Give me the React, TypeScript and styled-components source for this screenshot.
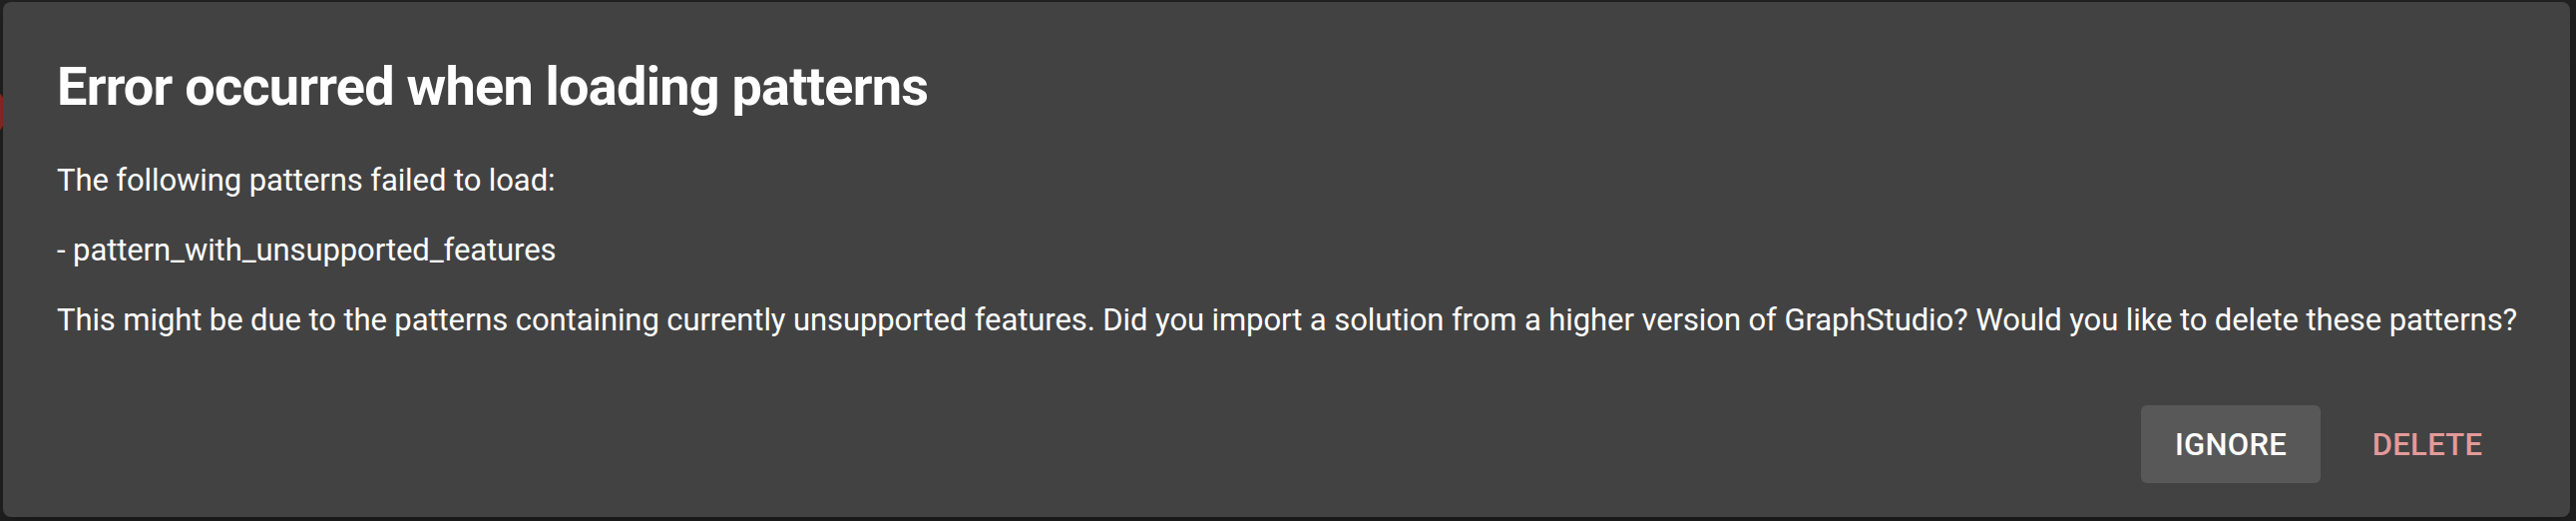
import React from 'react';
import styled, { createGlobalStyle } from 'styled-components';

const GlobalStyle = createGlobalStyle`
  html, body {
    margin: 0;
    padding: 0;
    background: #222222;
  }
  body {
    font-family: Roboto, "Liberation Sans", Arial, sans-serif;
    -webkit-font-smoothing: antialiased;
  }
`;

const Backdrop = styled.div`
  width: 2582px;
  height: 522px;
  background: #212121;
  padding: 2px 6px 4px 3px;
  box-sizing: border-box;
  position: relative;
  overflow: hidden;
`;

const BehindDot = styled.div`
  position: absolute;
  left: -20px;
  top: 90px;
  width: 26px;
  height: 44px;
  border-radius: 50%;
  background: #8e2b25;
`;

const Dialog = styled.div`
  position: relative;
  height: 516px;
  background: #424242;
  border-radius: 8px;
  display: flex;
  flex-direction: column;
  color: #ffffff;
  box-shadow: 0 11px 15px -7px rgba(0,0,0,0.2), 0 24px 38px 3px rgba(0,0,0,0.14);
`;

const Title = styled.h2`
  margin: 0;
  padding: 42px 54px 0;
  font-size: 54px;
  font-weight: 700;
  line-height: 86px;
  letter-spacing: -0.75px;
`;

const Content = styled.div`
  padding: 28px 20px 0 54px;
`;

const Text = styled.p`
  margin: 0 0 25px;
  font-size: 31px;
  line-height: 45px;
  font-weight: 400;
  letter-spacing: -0.09px;
  color: #ffffff;

  &:last-child { margin-bottom: 0; }
`;

const Actions = styled.div`
  margin-top: auto;
  display: flex;
  justify-content: flex-end;
  gap: 18px;
  padding: 0 54px 34px;
`;

const Button = styled.button<{ $tone?: 'danger' }>`
  height: 78px;
  width: ${(p) => (p.$tone === 'danger' ? '178px' : '180px')};
  padding: 0;
  border: none;
  border-radius: 6px;
  font-family: Roboto, "Liberation Sans", Arial, sans-serif;
  font-size: 31px;
  font-weight: 500;
  letter-spacing: 0.3px;
  text-transform: uppercase;
  cursor: pointer;
  background: ${(p) => (p.$tone === 'danger' ? 'transparent' : '#585858')};
  color: ${(p) => (p.$tone === 'danger' ? '#e39a9a' : '#ffffff')};
`;

export default function App() {
  return (
    <>
      <GlobalStyle />
      <Backdrop>
        <BehindDot />
        <Dialog role="dialog">
          <Title>Error occurred when loading patterns</Title>
          <Content>
            <Text>The following patterns failed to load:</Text>
            <Text>- pattern_with_unsupported_features</Text>
            <Text>
              This might be due to the patterns containing currently unsupported features. Did you import a solution from a higher version of GraphStudio? Would you like to delete these patterns?
            </Text>
          </Content>
          <Actions>
            <Button>Ignore</Button>
            <Button $tone="danger">Delete</Button>
          </Actions>
        </Dialog>
      </Backdrop>
    </>
  );
}
